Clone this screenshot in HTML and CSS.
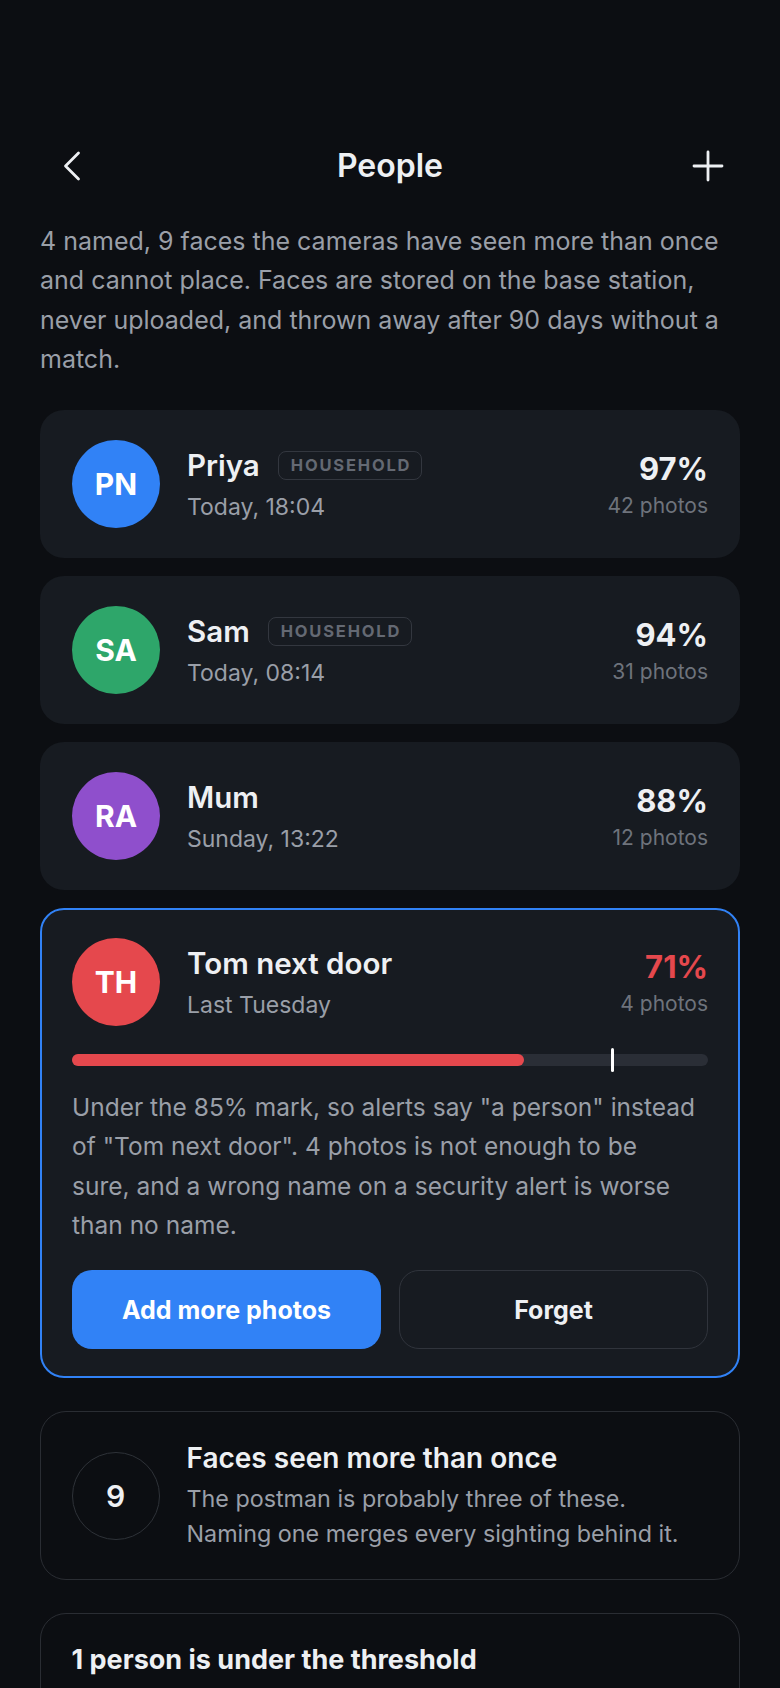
FILE: index.html
```html
<!DOCTYPE html>
<html lang="en">
<head>
<meta charset="utf-8">
<title>People</title>
<link rel="stylesheet" href="styles.css">
</head>
<body>
<main class="screen">
  <header class="topbar">
    <button class="icon-btn" aria-label="Back">
      <svg width="24" height="32" viewBox="0 0 24 32" fill="none" stroke="currentColor" stroke-width="2.8" stroke-linecap="round" stroke-linejoin="round"><path d="M18.5 3 L5.5 16 L18.5 29"/></svg>
    </button>
    <h1 class="title">People</h1>
    <button class="icon-btn" aria-label="Add person">
      <svg width="32" height="32" viewBox="0 0 32 32" fill="none" stroke="currentColor" stroke-width="2.8" stroke-linecap="round"><path d="M16 2 V30 M2 16 H30"/></svg>
    </button>
  </header>

  <p class="intro">4 named, 9 faces the cameras have seen more than once and cannot place. Faces are stored on the base station, never uploaded, and thrown away after 90 days without a match.</p>

  <section class="people">
    <article class="person">
      <div class="person-head">
        <div class="avatar avatar-blue">PN</div>
        <div class="person-info">
          <div class="name-row"><span class="name">Priya</span><span class="badge">HOUSEHOLD</span></div>
          <div class="seen">Today, 18:04</div>
        </div>
        <div class="score">
          <div class="pct">97%</div>
          <div class="photos">42 photos</div>
        </div>
      </div>
    </article>

    <article class="person">
      <div class="person-head">
        <div class="avatar avatar-green">SA</div>
        <div class="person-info">
          <div class="name-row"><span class="name">Sam</span><span class="badge">HOUSEHOLD</span></div>
          <div class="seen">Today, 08:14</div>
        </div>
        <div class="score">
          <div class="pct">94%</div>
          <div class="photos">31 photos</div>
        </div>
      </div>
    </article>

    <article class="person">
      <div class="person-head">
        <div class="avatar avatar-purple">RA</div>
        <div class="person-info">
          <div class="name-row"><span class="name">Mum</span></div>
          <div class="seen">Sunday, 13:22</div>
        </div>
        <div class="score">
          <div class="pct">88%</div>
          <div class="photos">12 photos</div>
        </div>
      </div>
    </article>

    <article class="person person-selected">
      <div class="person-head">
        <div class="avatar avatar-red">TH</div>
        <div class="person-info">
          <div class="name-row"><span class="name">Tom next door</span></div>
          <div class="seen">Last Tuesday</div>
        </div>
        <div class="score">
          <div class="pct pct-low">71%</div>
          <div class="photos">4 photos</div>
        </div>
      </div>
      <div class="meter">
        <div class="meter-fill" style="width: 71%"></div>
        <div class="meter-mark" style="left: 85%"></div>
      </div>
      <p class="note">Under the 85% mark, so alerts say "a person" instead of "Tom next door". 4 photos is not enough to be<br>sure, and a wrong name on a security alert is worse than no name.</p>
      <div class="actions">
        <button class="btn btn-primary">Add more photos</button>
        <button class="btn btn-outline">Forget</button>
      </div>
    </article>
  </section>

  <section class="outline-card faces">
    <div class="count-ring">9</div>
    <div class="faces-text">
      <h2 class="faces-title">Faces seen more than once</h2>
      <p class="faces-sub">The postman is probably three of these. Naming one merges every sighting behind it.</p>
    </div>
  </section>

  <section class="outline-card threshold">
    <h2 class="threshold-title">1 person is under the threshold</h2>
  </section>
</main>
</body>
</html>
```

FILE: styles.css
```css
* { box-sizing: border-box; }

html, body {
  margin: 0;
  padding: 0;
  background: #0c0e12;
}

body {
  font-family: Inter, "Noto Sans", "Liberation Sans", sans-serif;
  color: #eef0f3;
}

.screen {
  padding: 138px 40px 40px;
}

.topbar {
  display: flex;
  align-items: center;
  justify-content: space-between;
  height: 56px;
}

.icon-btn {
  width: 64px;
  height: 56px;
  display: flex;
  align-items: center;
  justify-content: center;
  background: none;
  border: 0;
  padding: 0;
  color: #eef0f3;
}

.title {
  margin: 0;
  font-size: 32px;
  font-weight: 600;
  line-height: 56px;
  color: #eef0f3;
}

.intro {
  margin: 27.5px 0 0;
  font-size: 25px;
  line-height: 39.5px;
  color: #9a9fa8;
}

.people {
  margin-top: 30.5px;
  display: flex;
  flex-direction: column;
  gap: 18px;
}

.person {
  background: #171b21;
  border-radius: 24px;
  padding: 30px 32px;
}

.person-selected {
  border: 2px solid #3182f6;
  padding: 28px 30px 27px;
}

.person-head {
  display: flex;
  align-items: flex-start;
}

.avatar {
  flex: none;
  width: 88px;
  height: 88px;
  border-radius: 50%;
  display: flex;
  align-items: center;
  justify-content: center;
  font-size: 30px;
  font-weight: 700;
  color: #ffffff;
}

.avatar-blue { background: #3182f6; }
.avatar-green { background: #2ea66a; }
.avatar-purple { background: #8f4fcc; }
.avatar-red { background: #e5484d; }

.person-info {
  flex: 1;
  margin-left: 27px;
  margin-top: 8px;
}

.name-row {
  display: flex;
  align-items: center;
  gap: 18px;
  height: 34px;
}

.name {
  font-size: 29.5px;
  font-weight: 600;
  line-height: 34px;
  color: #eef0f3;
}

.badge {
  font-size: 16.5px;
  font-weight: 700;
  letter-spacing: 1.8px;
  line-height: 18px;
  color: #646973;
  border: 1.5px solid #33373f;
  border-radius: 8px;
  padding: 4.5px 10px 4.5px 12px;
}

.seen {
  margin-top: 10px;
  font-size: 23px;
  line-height: 30px;
  color: #9a9fa8;
}

.score {
  margin-top: 9.7px;
  text-align: right;
}

.pct {
  font-size: 31px;
  font-weight: 700;
  line-height: 38px;
  color: #eef0f3;
}

.pct-low { color: #e5484d; }

.photos {
  margin-top: 4.6px;
  font-size: 21px;
  line-height: 28px;
  color: #6e737c;
}

.meter {
  position: relative;
  margin-top: 28px;
  height: 12px;
  border-radius: 6px;
  background: #2a2e36;
}

.meter-fill {
  height: 100%;
  border-radius: 6px;
  background: #e5484d;
}

.meter-mark {
  position: absolute;
  top: -6px;
  width: 3px;
  height: 24px;
  margin-left: -1.5px;
  border-radius: 2px;
  background: #ffffff;
}

.note {
  margin: 22px 0 0;
  font-size: 24.5px;
  line-height: 39.3px;
  color: #9a9fa8;
}

.actions {
  margin-top: 25px;
  display: grid;
  grid-template-columns: 1fr 1fr;
  gap: 18px;
}

.btn {
  height: 79px;
  border-radius: 20px;
  font-family: inherit;
  font-size: 25px;
  font-weight: 700;
  color: #ffffff;
}

.btn-primary {
  background: #3182f6;
  border: 0;
}

.btn-outline {
  background: transparent;
  border: 1.5px solid #30343c;
  color: #eef0f3;
}

.outline-card {
  margin-top: 33px;
  border: 1.5px solid #2a2d33;
  border-radius: 26px;
}

.faces {
  display: flex;
  align-items: center;
  padding: 28.5px 30.5px;
  gap: 27px;
}

.count-ring {
  flex: none;
  width: 88px;
  height: 88px;
  border-radius: 50%;
  border: 1.5px solid #2e3238;
  display: flex;
  align-items: center;
  justify-content: center;
  font-size: 30px;
  font-weight: 600;
  color: #eef0f3;
}

.faces-title {
  margin: 0;
  font-size: 28px;
  font-weight: 600;
  line-height: 34px;
  color: #eef0f3;
}

.faces-sub {
  margin: 6px 0 0;
  font-size: 23.3px;
  line-height: 35px;
  color: #9a9fa8;
}

.threshold {
  padding: 28.5px 30.5px 40px;
}

.threshold-title {
  margin: 0;
  font-size: 27px;
  font-weight: 700;
  line-height: 34px;
  color: #eef0f3;
}
```
